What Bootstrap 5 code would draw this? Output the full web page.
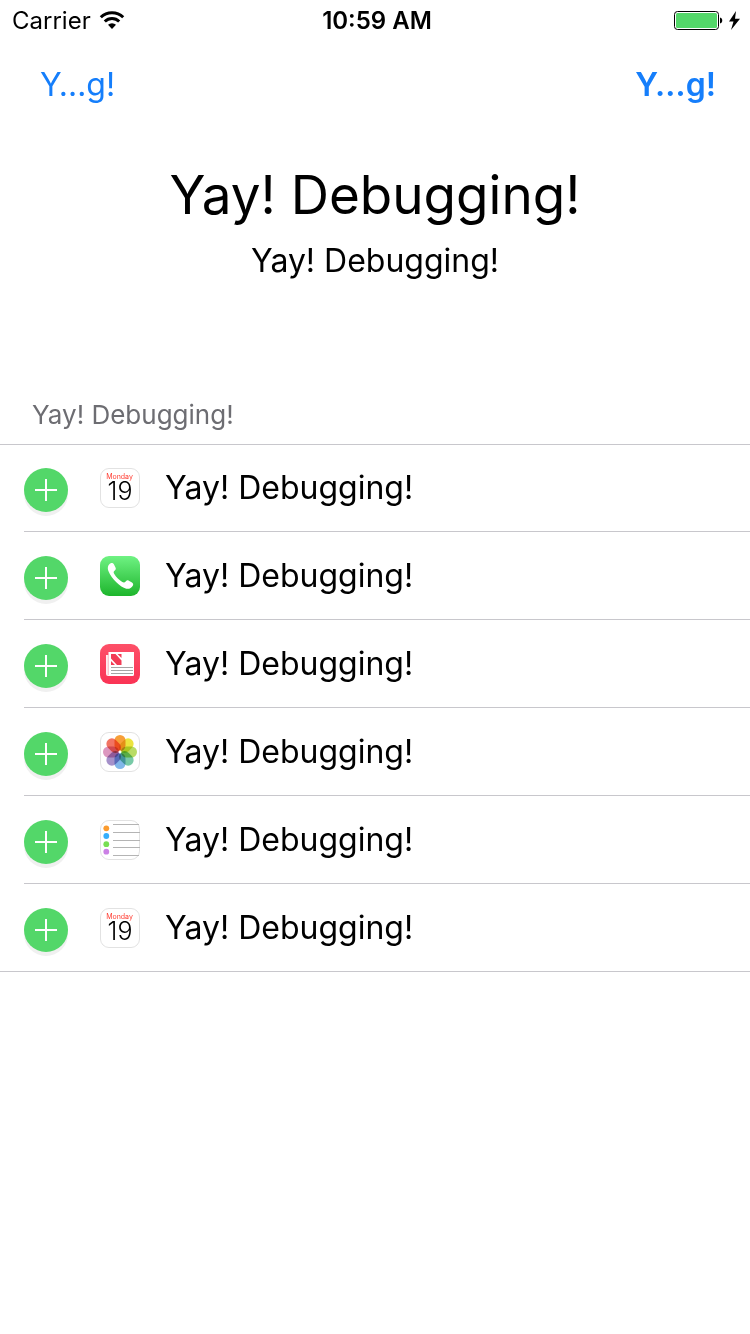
<!DOCTYPE html>
<html lang="en">
<head>
<meta charset="utf-8">
<meta name="viewport" content="width=device-width, initial-scale=1">
<title>Yay! Debugging!</title>
<link href="https://cdn.jsdelivr.net/npm/bootstrap@5.3.0/dist/css/bootstrap.min.css" rel="stylesheet">
<style>
  body { font-family: Inter, "Liberation Sans", sans-serif; color: #000; background: #fff; }
  .status-bar { height: 42px; font-size: 24px; line-height: 42px; padding: 0 8px 0 12px; }
  .status-bar > * { flex: 1 1 0; }
  .clock { font-weight: 600; }
  .top-nav { height: 86px; padding: 0 34px 0 40px; }
  .nav-action { font-size: 32px; line-height: 40px; color: #157efb; padding: 0; border: 0; background: none; }
  .nav-action.strong { font-weight: 600; }
  .hero { padding: 33px 16px 118px; }
  .hero h1 { font-size: 53px; line-height: 68px; font-weight: 400; margin: 0; }
  .hero p { font-size: 32px; line-height: 40px; margin: 12px 0 0; }
  .section-title { font-size: 26px; line-height: 32px; font-weight: 400; color: #6d6d72; padding: 0 32px; margin: 0 0 13px; }
  .item-list { border-top: 1px solid #c8c7cc; border-bottom: 1px solid #c8c7cc; }
  .item { height: 88px; margin-left: 24px; border-bottom: 1px solid #c8c7cc; padding: 24px 0 19px; }
  .item:first-child { height: 87px; padding-top: 23px; }
  .item:last-child { height: 87px; border-bottom: 0; }
  .add-btn { width: 44px; height: 44px; padding: 0; border: 0; border-radius: 50%; background: #53d769; box-shadow: 0 4px 0 #f0f0f0; }
  .app-icon { margin: 0 25px 0 32px; }
  .item-label { font-size: 32px; line-height: 40px; }
  .petals { isolation: isolate; opacity: .94; }
  .petals rect { mix-blend-mode: multiply; }
  svg { display: block; flex: none; }
</style>
</head>
<body>
<svg width="0" height="0" class="position-absolute" aria-hidden="true">
  <defs>
    <linearGradient id="phone-bg" x1="0" y1="0" x2="0" y2="1"><stop offset="0" stop-color="#6ff283"/><stop offset="1" stop-color="#1db52c"/></linearGradient>
    <linearGradient id="news-bg" x1="0" y1="0" x2="0" y2="1"><stop offset="0" stop-color="#fd5068"/><stop offset="1" stop-color="#fa3355"/></linearGradient>
    <symbol id="plus" viewBox="0 0 44 44"><path d="M11 22h22M22 11v22" stroke="#fff" stroke-width="2" fill="none"/></symbol>
    <symbol id="calendar" viewBox="0 0 40 40">
      <rect x=".5" y=".5" width="39" height="39" rx="8.5" fill="#fff" stroke="#e2e2e2"/>
      <text x="19.5" y="11" text-anchor="middle" font-size="7" fill="#ff3b30">Monday</text>
      <text x="20" y="32" text-anchor="middle" font-size="25" font-weight="300" fill="#000">19</text>
    </symbol>
    <symbol id="phone" viewBox="0 0 40 40">
      <rect width="40" height="40" rx="9" fill="url(#phone-bg)"/>
      <path d="M10.7 7.3c1.4-.8 2.6-.1 3.3 1.1l1.500 3.100c.6 1.300.3 2.100-.7 2.900-1.500 1.200-1.400 2.200-.5 3.600 2.200 3.400 4.600 5.900 8 8 1.400.8 2.400.7 3.600-.7.8-1 1.700-1.200 2.900-.6l3.200 1.800c1.200.8 1.600 1.900.8 3.200-1.400 2.400-3.800 3.600-6.600 3-5.700-1.400-14.600-9.600-17.800-17.700-1.300-3.400-.2-6.400 2.300-7.700z" fill="#fff"/>
    </symbol>
    <symbol id="news" viewBox="0 0 40 40">
      <rect width="40" height="40" rx="9" fill="url(#news-bg)"/>
      <path d="M6 11h3v21H8a2 2 0 0 1-2-2z" fill="#fff" opacity=".9"/>
      <path d="M8.500 8H34v22.500a1.500 1.500 0 0 1-1.500 1.500H9.500a1 1 0 0 1-1-1z" fill="#fff"/>
      <path d="M8.300 11v20" stroke="#f6a3af" stroke-width=".7"/>
      <path d="M11 10h4.500l6 6.500V21H17l-6-6.500zM17.500 10h4v4zM11 17l4 4h-4z" fill="#f23c55"/>
      <path d="M23 23.500h10M11 26.500h22M11 29.500h22" stroke="#a5a5a5"/>
      <path d="M11 23.500h12" stroke="#a5a5a5"/>
    </symbol>
    <symbol id="photos" viewBox="0 0 40 40">
      <rect x=".5" y=".5" width="39" height="39" rx="8.5" fill="#fff" stroke="#e2e2e2"/>
      <g class="petals">
        <rect x="14.5" y="3" width="11" height="16" rx="5.5" fill="#f79a2d"/>
        <rect x="14.5" y="3" width="11" height="16" rx="5.5" fill="#ebe334" transform="rotate(45 20 20)"/>
        <rect x="14.5" y="3" width="11" height="16" rx="5.5" fill="#b5da5c" transform="rotate(90 20 20)"/>
        <rect x="14.5" y="3" width="11" height="16" rx="5.5" fill="#70c7a2" transform="rotate(135 20 20)"/>
        <rect x="14.5" y="3" width="11" height="16" rx="5.5" fill="#7ab3e8" transform="rotate(180 20 20)"/>
        <rect x="14.5" y="3" width="11" height="16" rx="5.5" fill="#a08bc7" transform="rotate(225 20 20)"/>
        <rect x="14.5" y="3" width="11" height="16" rx="5.5" fill="#da91bc" transform="rotate(270 20 20)"/>
        <rect x="14.5" y="3" width="11" height="16" rx="5.5" fill="#f26c5a" transform="rotate(315 20 20)"/>
      </g>
      <circle cx="20" cy="20" r="1.4" fill="#fff"/>
    </symbol>
    <symbol id="reminders" viewBox="0 0 40 40">
      <rect x=".5" y=".5" width="39" height="39" rx="8.5" fill="#fff" stroke="#e2e2e2"/>
      <path d="M13 4.500h26M13 12.500h27M13 20.500h27M13 27.500h27M13 35.500h26" stroke="#b4b4b4"/>
      <circle cx="6.300" cy="8.300" r="2.900" fill="#fb9b2e"/><circle cx="6.300" cy="16" r="2.900" fill="#35aefb"/>
      <circle cx="6.300" cy="24.200" r="2.900" fill="#78df53"/><circle cx="6.300" cy="31.700" r="2.900" fill="#cb80e5"/>
    </symbol>
  </defs>
</svg>

<header>
  <div class="status-bar d-flex align-items-center">
    <div class="d-flex align-items-center gap-2">
      <span>Carrier</span>
      <svg width="26" height="20" viewBox="0 0 26 20" role="img" aria-label="Wi-Fi">
        <g fill="none" stroke="#000" stroke-width="3"><path d="M1.800 6.300a16 16 0 0 1 22.400 0"/><path d="M5.800 10.500a10.200 10.200 0 0 1 14.400 0"/></g>
        <path d="M13 18l-4-4.200a5.800 5.800 0 0 1 8 0z"/>
      </svg>
    </div>
    <div class="clock text-center">10:59 AM</div>
    <div class="d-flex align-items-center justify-content-end">
      <svg width="68" height="22" viewBox="0 0 68 22" role="img" aria-label="Battery full, charging">
        <rect x=".5" y="1.500" width="44" height="18" rx="3" fill="#fff" stroke="#000"/>
        <rect x="2" y="3" width="41" height="15" rx="1.500" fill="#53d769"/>
        <path d="M46 7.500c3 .5 3 5.500 0 6z"/>
        <path d="M62 1l-7 10.500h4.500L57 20l9-11.300h-5z"/>
      </svg>
    </div>
  </div>
  <nav class="top-nav d-flex justify-content-between align-items-center">
    <button type="button" class="nav-action">Y…g!</button>
    <button type="button" class="nav-action strong">Y…g!</button>
  </nav>
</header>

<main>
  <section class="hero text-center">
    <h1>Yay! Debugging!</h1>
    <p>Yay! Debugging!</p>
  </section>
  <section>
    <h2 class="section-title">Yay! Debugging!</h2>
    <ul class="item-list list-unstyled mb-0">
      <li class="item d-flex align-items-start"><button type="button" class="add-btn" aria-label="Add"><svg width="44" height="44"><use href="#plus"/></svg></button><svg class="app-icon" width="40" height="40"><use href="#calendar"/></svg><span class="item-label">Yay! Debugging!</span></li>
      <li class="item d-flex align-items-start"><button type="button" class="add-btn" aria-label="Add"><svg width="44" height="44"><use href="#plus"/></svg></button><svg class="app-icon" width="40" height="40"><use href="#phone"/></svg><span class="item-label">Yay! Debugging!</span></li>
      <li class="item d-flex align-items-start"><button type="button" class="add-btn" aria-label="Add"><svg width="44" height="44"><use href="#plus"/></svg></button><svg class="app-icon" width="40" height="40"><use href="#news"/></svg><span class="item-label">Yay! Debugging!</span></li>
      <li class="item d-flex align-items-start"><button type="button" class="add-btn" aria-label="Add"><svg width="44" height="44"><use href="#plus"/></svg></button><svg class="app-icon" width="40" height="40"><use href="#photos"/></svg><span class="item-label">Yay! Debugging!</span></li>
      <li class="item d-flex align-items-start"><button type="button" class="add-btn" aria-label="Add"><svg width="44" height="44"><use href="#plus"/></svg></button><svg class="app-icon" width="40" height="40"><use href="#reminders"/></svg><span class="item-label">Yay! Debugging!</span></li>
      <li class="item d-flex align-items-start"><button type="button" class="add-btn" aria-label="Add"><svg width="44" height="44"><use href="#plus"/></svg></button><svg class="app-icon" width="40" height="40"><use href="#calendar"/></svg><span class="item-label">Yay! Debugging!</span></li>
    </ul>
  </section>
</main>
<script src="https://cdn.jsdelivr.net/npm/bootstrap@5.3.0/dist/js/bootstrap.bundle.min.js"></script>
</body>
</html>
